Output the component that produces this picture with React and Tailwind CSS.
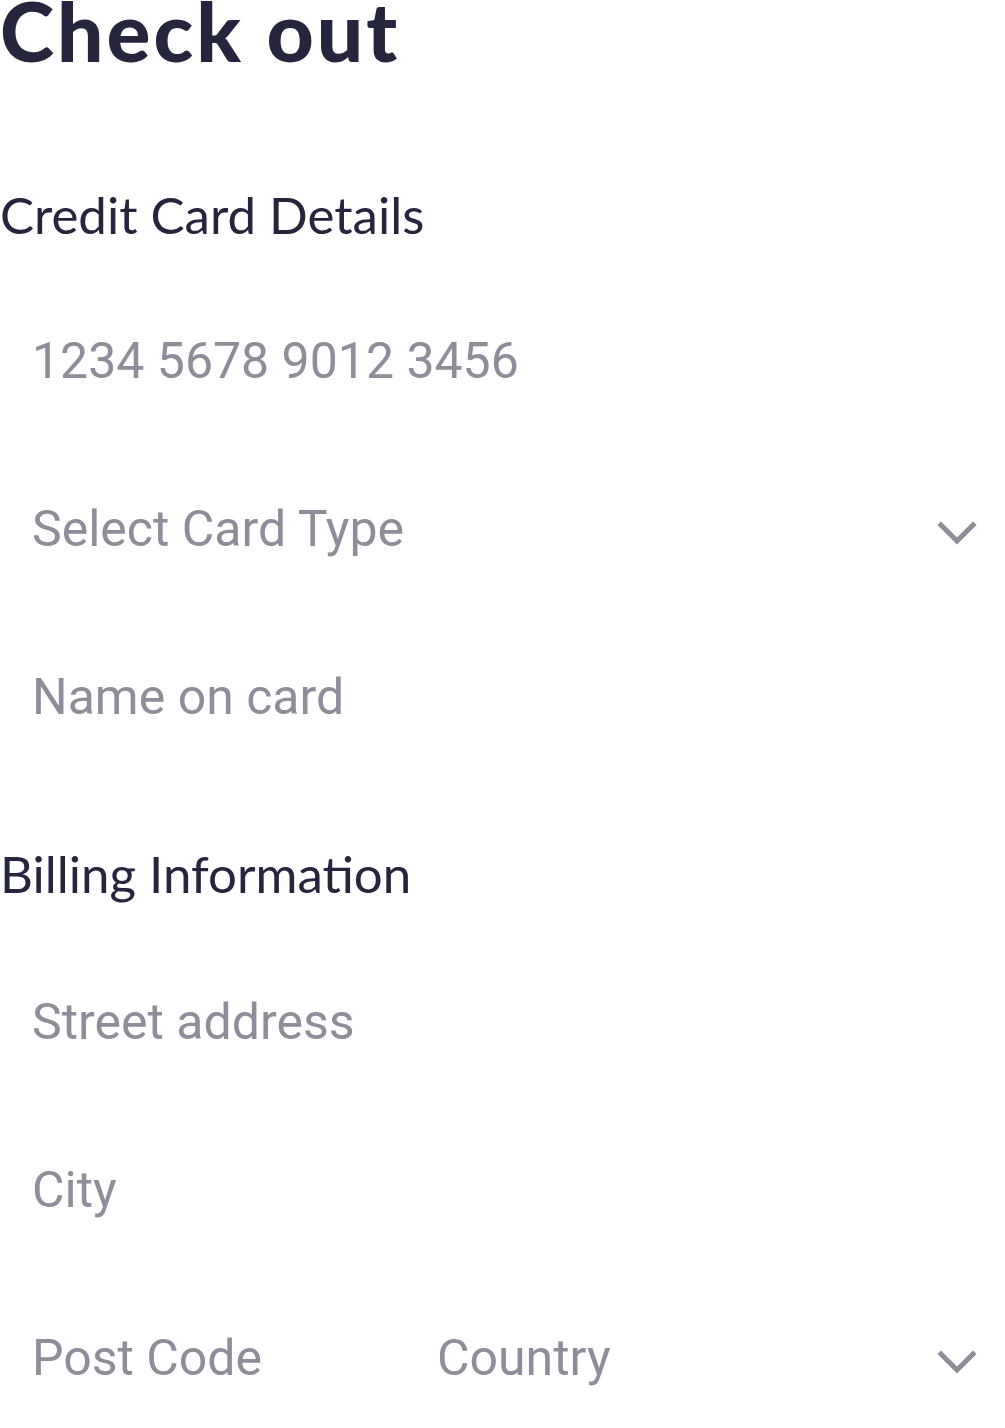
import React from 'react';

const Chevron = () => (
  <svg width="40" height="28" viewBox="0 0 40 28" fill="none" className="shrink-0">
    <path d="M4 5 L20 21 L36 5" stroke="#8e8e9a" strokeWidth="5" strokeLinecap="square" strokeLinejoin="miter" />
  </svg>
);

const Field = ({ placeholder, select, className = '' }) => (
  <div className={`flex items-center min-w-0 h-[168px] ${className}`}>
    <input
      placeholder={placeholder}
      size={1}
      className="flex-1 min-w-0 w-0 h-full bg-transparent outline-none pl-8 text-[50px] font-['Roboto',sans-serif] text-[#25253d] placeholder:text-[#8e8e9a]"
    />
    {select && <div className="pr-[28px] mt-[10px]"><Chevron /></div>}
  </div>
);

export default function App() {
  return (
    <div className="w-[1005px] h-[1428px] overflow-hidden bg-white text-[#25253d]">
      <h1 className="font-['Lato',sans-serif] font-black text-[82px] leading-none -mt-[11px] tracking-[3px]">Check out</h1>

      <h2 className="font-['Lato',sans-serif] text-[51px] leading-none mt-[118px]">Credit Card Details</h2>

      <div className="mt-[37px]">
        <Field placeholder="1234 5678 9012 3456" />
        <Field placeholder="Select Card Type" select />
        <Field placeholder="Name on card" />
      </div>

      <h2 className="font-['Lato',sans-serif] text-[51px] leading-none mt-[67px]">Billing Information</h2>

      <div className="mt-[39px]">
        <Field placeholder="Street address" />
        <Field placeholder="City" />
        <div className="flex">
          <Field placeholder="Post Code" className="w-[405px]" />
          <Field placeholder="Country" select className="flex-1" />
        </div>
      </div>
    </div>
  );
}
